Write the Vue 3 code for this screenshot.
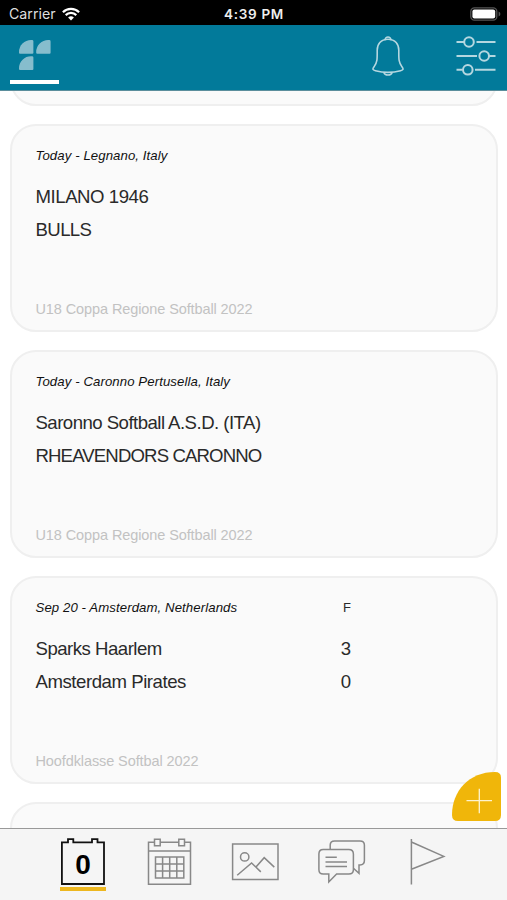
<template>
  <div class="app">
    <div class="status-bar">
      <div class="carrier">
        <span>Carrier</span>
        <svg class="wifi" width="18" height="14" viewBox="0 0 18 14">
          <path d="M0.9 5.2a11.5 11.5 0 0 1 16.2 0" />
          <path d="M3.7 8.1a7.5 7.5 0 0 1 10.6 0" />
          <path class="dot" d="M9 13.6l-2.9-3a4.1 4.1 0 0 1 5.8 0z" />
        </svg>
      </div>
      <span class="clock">4:39 PM</span>
      <svg class="battery" width="31" height="14" viewBox="0 0 31 14">
        <rect class="shell" x="0.8" y="0.8" width="26" height="12.4" rx="3.6" />
        <rect class="level" x="2.4" y="2.4" width="22.8" height="9.2" rx="2" />
        <path class="tip" d="M28.6 4.6q1.8 0.6 1.8 2.4t-1.8 2.4z" />
      </svg>
    </div>

    <header class="header">
      <button class="logo-tab" aria-label="Home">
        <svg class="logo" width="32" height="30" viewBox="0 0 32 30">
          <path d="M0 12.7V12A12 12 0 0 1 12 0h1q1.4 0 1.4 1.4v11.3q0 1-1 1H1q-1 0-1-1z" />
          <path d="M17.2 12.7V12A12 12 0 0 1 29.2 0h1q1.4 0 1.4 1.4v11.3q0 1-1 1h-12.4q-1 0-1-1z" />
          <path d="M0 28.9V28A12 12 0 0 1 12 16.2h1q1.4 0 1.4 1.4v11.3q0 1-1 1H1q-1 0-1-1z" />
        </svg>
      </button>
      <div class="actions">
        <svg width="34" height="40" viewBox="0 0 34 40">
          <path d="M14.1 4.2C14 -0.1 20 -0.1 19.9 4.2" />
          <path d="M17 3.2C9.6 3.2 6.2 8.2 6.2 14.2C6.2 22 6.6 26.4 3.2 30.4C1 33.2 1.6 34 4.4 34.7C12.6 36.9 21.4 36.9 29.6 34.7C32.4 34 33 33.2 30.8 30.4C27.4 26.4 27.8 22 27.8 14.2C27.8 8.2 24.4 3.2 17 3.2z" />
          <path d="M12.8 36.2C13.8 39.9 20.2 39.9 21.2 36.2" />
        </svg>
        <svg class="sliders" width="40" height="40" viewBox="0 0 40 40">
          <path d="M0.5 6H8M20.5 6H39.5M0.5 20H21M32.5 20H39.5M0.5 33.8H6.5M19 33.8H39.5" />
          <circle cx="13" cy="6" r="4.8" />
          <circle cx="28.2" cy="20" r="4.8" />
          <circle cx="11.8" cy="33.8" r="4.8" />
        </svg>
      </div>
    </header>

    <main class="feed">
      <div class="games">
        <article v-for="game in games" :key="game.id" class="card">
          <template v-if="game.teams">
            <div class="row head">
              <span class="place">{{ game.place }}</span>
              <span v-if="game.final" class="col">F</span>
            </div>
            <div v-for="team in game.teams" :key="team.name" class="row team">
              <span :style="{ letterSpacing: team.spacing + 'px' }">{{ team.name }}</span>
              <span v-if="game.final" class="col">{{ team.score }}</span>
            </div>
            <div class="league">{{ game.league }}</div>
          </template>
        </article>
      </div>
      <button class="add" aria-label="Add">
        <svg width="49" height="49" viewBox="0 0 49 49">
          <path class="shape" d="M0 43C0 19 17 0 43 0Q49 0 49 5.5V43Q49 49 43 49H6Q0 49 0 43z" />
          <path class="plus" d="M14.5 28.7H40M27.3 16.7V41.2" />
        </svg>
      </button>
    </main>

    <nav class="tabs">
      <button class="tab active">
        <svg width="46" height="48" viewBox="0 0 46 48">
          <path d="M1.9 4.3H8V1.2H13.3V4.3H32V1.2H37.5V4.3H44V46H1.9z" />
          <text x="23" y="35.6" text-anchor="middle">0</text>
        </svg>
      </button>
      <button class="tab">
        <svg width="46" height="48" viewBox="0 0 46 48">
          <path d="M8 4.3H2.5V46.3H44.5V4.3H39M33 4.3H14.5M2.5 12.9H44.5M8.5 1.3H14.2V7.7H8.5zM32.8 1.3H38.5V7.7H32.8z" />
          <path d="M9.5 19H37.8V40H9.5zM9.5 26H37.8M9.5 33H37.8M16.6 19V40M23.7 19V40M30.8 19V40" />
        </svg>
      </button>
      <button class="tab">
        <svg width="48" height="48" viewBox="0 0 48 48">
          <path d="M1.6 6H47V41.5H1.6z" />
          <circle cx="13.7" cy="18.9" r="4.2" />
          <path d="M6.2 37.3L20.6 25L29.8 33.9M25 29.1L33.2 19.7L43.3 29.1" />
        </svg>
      </button>
      <button class="tab">
        <svg width="48" height="48" viewBox="0 0 48 48">
          <path d="M12.2 11.4V7Q12.2 2.9 16.6 2.9H42Q46.4 2.9 46.4 7V22.6Q46.4 27 42 27H41V35.4L35.4 30.2" />
          <path d="M5.2 11.4H30.8Q35.4 11.4 35.4 16V31.4Q35.4 36 30.8 36H18.6L10.8 44V36H5.2Q0.9 36 0.9 31.4V16Q0.9 11.4 5.2 11.4z" />
          <path d="M7.5 19.3H18.8M7.5 24H29M7.5 28.6H29" />
        </svg>
      </button>
      <button class="tab">
        <svg width="48" height="48" viewBox="0 0 48 48">
          <path d="M6.4 1V46.5M6.4 4L38.8 18.4L6.4 31.2" />
        </svg>
      </button>
    </nav>
  </div>
</template>

<script setup>
import { ref } from 'vue'

const games = ref([
  { id: 1 },
  {
    id: 2,
    place: 'Today - Legnano, Italy',
    league: 'U18 Coppa Regione Softball 2022',
    teams: [
      { name: 'MILANO 1946', spacing: -0.45 },
      { name: 'BULLS', spacing: -0.6 }
    ]
  },
  {
    id: 3,
    place: 'Today - Caronno Pertusella, Italy',
    league: 'U18 Coppa Regione Softball 2022',
    teams: [
      { name: 'Saronno Softball A.S.D. (ITA)', spacing: -0.53 },
      { name: 'RHEAVENDORS CARONNO', spacing: -0.87 }
    ]
  },
  {
    id: 4,
    place: 'Sep 20 - Amsterdam, Netherlands',
    league: 'Hoofdklasse Softbal 2022',
    final: true,
    teams: [
      { name: 'Sparks Haarlem', score: 3, spacing: -0.5 },
      { name: 'Amsterdam Pirates', score: 0, spacing: -0.45 }
    ]
  },
  { id: 5 }
])
</script>

<style>
body {
  margin: 0;
}
</style>

<style scoped>
.app {
  display: flex;
  flex-direction: column;
  height: 100vh;
  overflow: hidden;
  background: #fff;
  font-family: 'Liberation Sans', Arial, sans-serif;
}

button {
  padding: 0;
  border: none;
  background: none;
}

svg {
  display: block;
  fill: none;
}

.status-bar {
  display: grid;
  grid-template-columns: 1fr auto 1fr;
  align-items: center;
  height: 25px;
  padding: 2px 6px 0 9px;
  box-sizing: border-box;
  background: #000;
  color: #dedede;
  font-family: Inter, sans-serif;
  font-size: 14.2px;
}

.carrier {
  display: flex;
  align-items: center;
  gap: 6px;
}

.clock {
  margin-right: 2px;
  font-weight: 600;
  font-size: 13.5px;
  letter-spacing: 0.7px;
  color: #eee;
}

.wifi path {
  stroke: #fff;
  stroke-width: 2.2;
}

.wifi .dot {
  fill: #fff;
  stroke: none;
}

.battery {
  justify-self: end;
}

.battery .shell {
  stroke: #555;
  stroke-width: 1.3;
}

.battery .level {
  fill: #fff;
}

.battery .tip {
  fill: #555;
}

.header {
  display: flex;
  justify-content: space-between;
  flex: none;
  height: 66px;
  padding: 0 11px 0 10px;
  box-sizing: border-box;
  background: #027a9a;
  border-bottom: 1px solid #5b8e9c;
}

.logo-tab {
  display: flex;
  align-items: flex-start;
  width: 49px;
  height: 59px;
  padding: 15px 0 0 9px;
  box-sizing: border-box;
  border-bottom: 4px solid #fff;
}

.logo path {
  fill: #86bdcd;
}

.actions {
  display: flex;
  gap: 51px;
  padding-top: 11px;
}

.actions svg {
  stroke: #b5d7e0;
  stroke-width: 1.6;
}

.actions .sliders {
  stroke-width: 2;
}

.feed {
  position: relative;
  flex: 1;
  min-height: 0;
  overflow: hidden;
}

.games {
  display: flex;
  flex-direction: column;
  gap: 18px;
  margin-top: -193px;
  padding: 0 9px 0 10px;
}

.card {
  display: flex;
  flex-direction: column;
  flex: none;
  height: 208px;
  padding: 21px 24px 12px 23.5px;
  box-sizing: border-box;
  border: 2px solid #efefef;
  border-radius: 26px;
  background: #fafafa;
  color: #2a2a2a;
}

.row {
  display: grid;
  grid-template-columns: 292px 37px;
}

.head {
  height: 27px;
  line-height: 18px;
  font-size: 13px;
  margin-bottom: 6px;
}

.head .col {
  padding-left: 2px;
}

.place {
  font-size: 13.2px;
  font-style: italic;
  letter-spacing: 0.09px;
  color: #111;
}

.col {
  text-align: center;
}

.team {
  height: 33px;
  line-height: 33px;
  font-size: 18.6px;
}

.league {
  margin-top: auto;
  line-height: 18px;
  font-size: 14.5px;
  letter-spacing: -0.1px;
  color: #c2c2c2;
}

.add {
  position: absolute;
  right: 6px;
  bottom: 7px;
}

.add .shape {
  fill: #f0b60a;
}

.add .plus {
  stroke: #fdf3cf;
  stroke-width: 1.3;
}

.tabs {
  display: flex;
  gap: 39px;
  flex: none;
  height: 72px;
  padding: 9px 0 0 60px;
  box-sizing: border-box;
  border-top: 1px solid #999;
  background: #f5f5f5;
}

.tab {
  display: flex;
  align-items: flex-start;
  height: 53px;
  box-sizing: border-box;
}

.tab svg {
  stroke: #888;
  stroke-width: 1.5;
}

.tab.active {
  margin-right: 1px;
  border-bottom: 4px solid #edb71f;
}

.tab.active svg {
  stroke: #111;
  stroke-width: 1.8;
}

.tab text {
  fill: #000;
  stroke: none;
  font-family: 'Liberation Sans', Arial, sans-serif;
  font-size: 28px;
  font-weight: 700;
}
</style>
